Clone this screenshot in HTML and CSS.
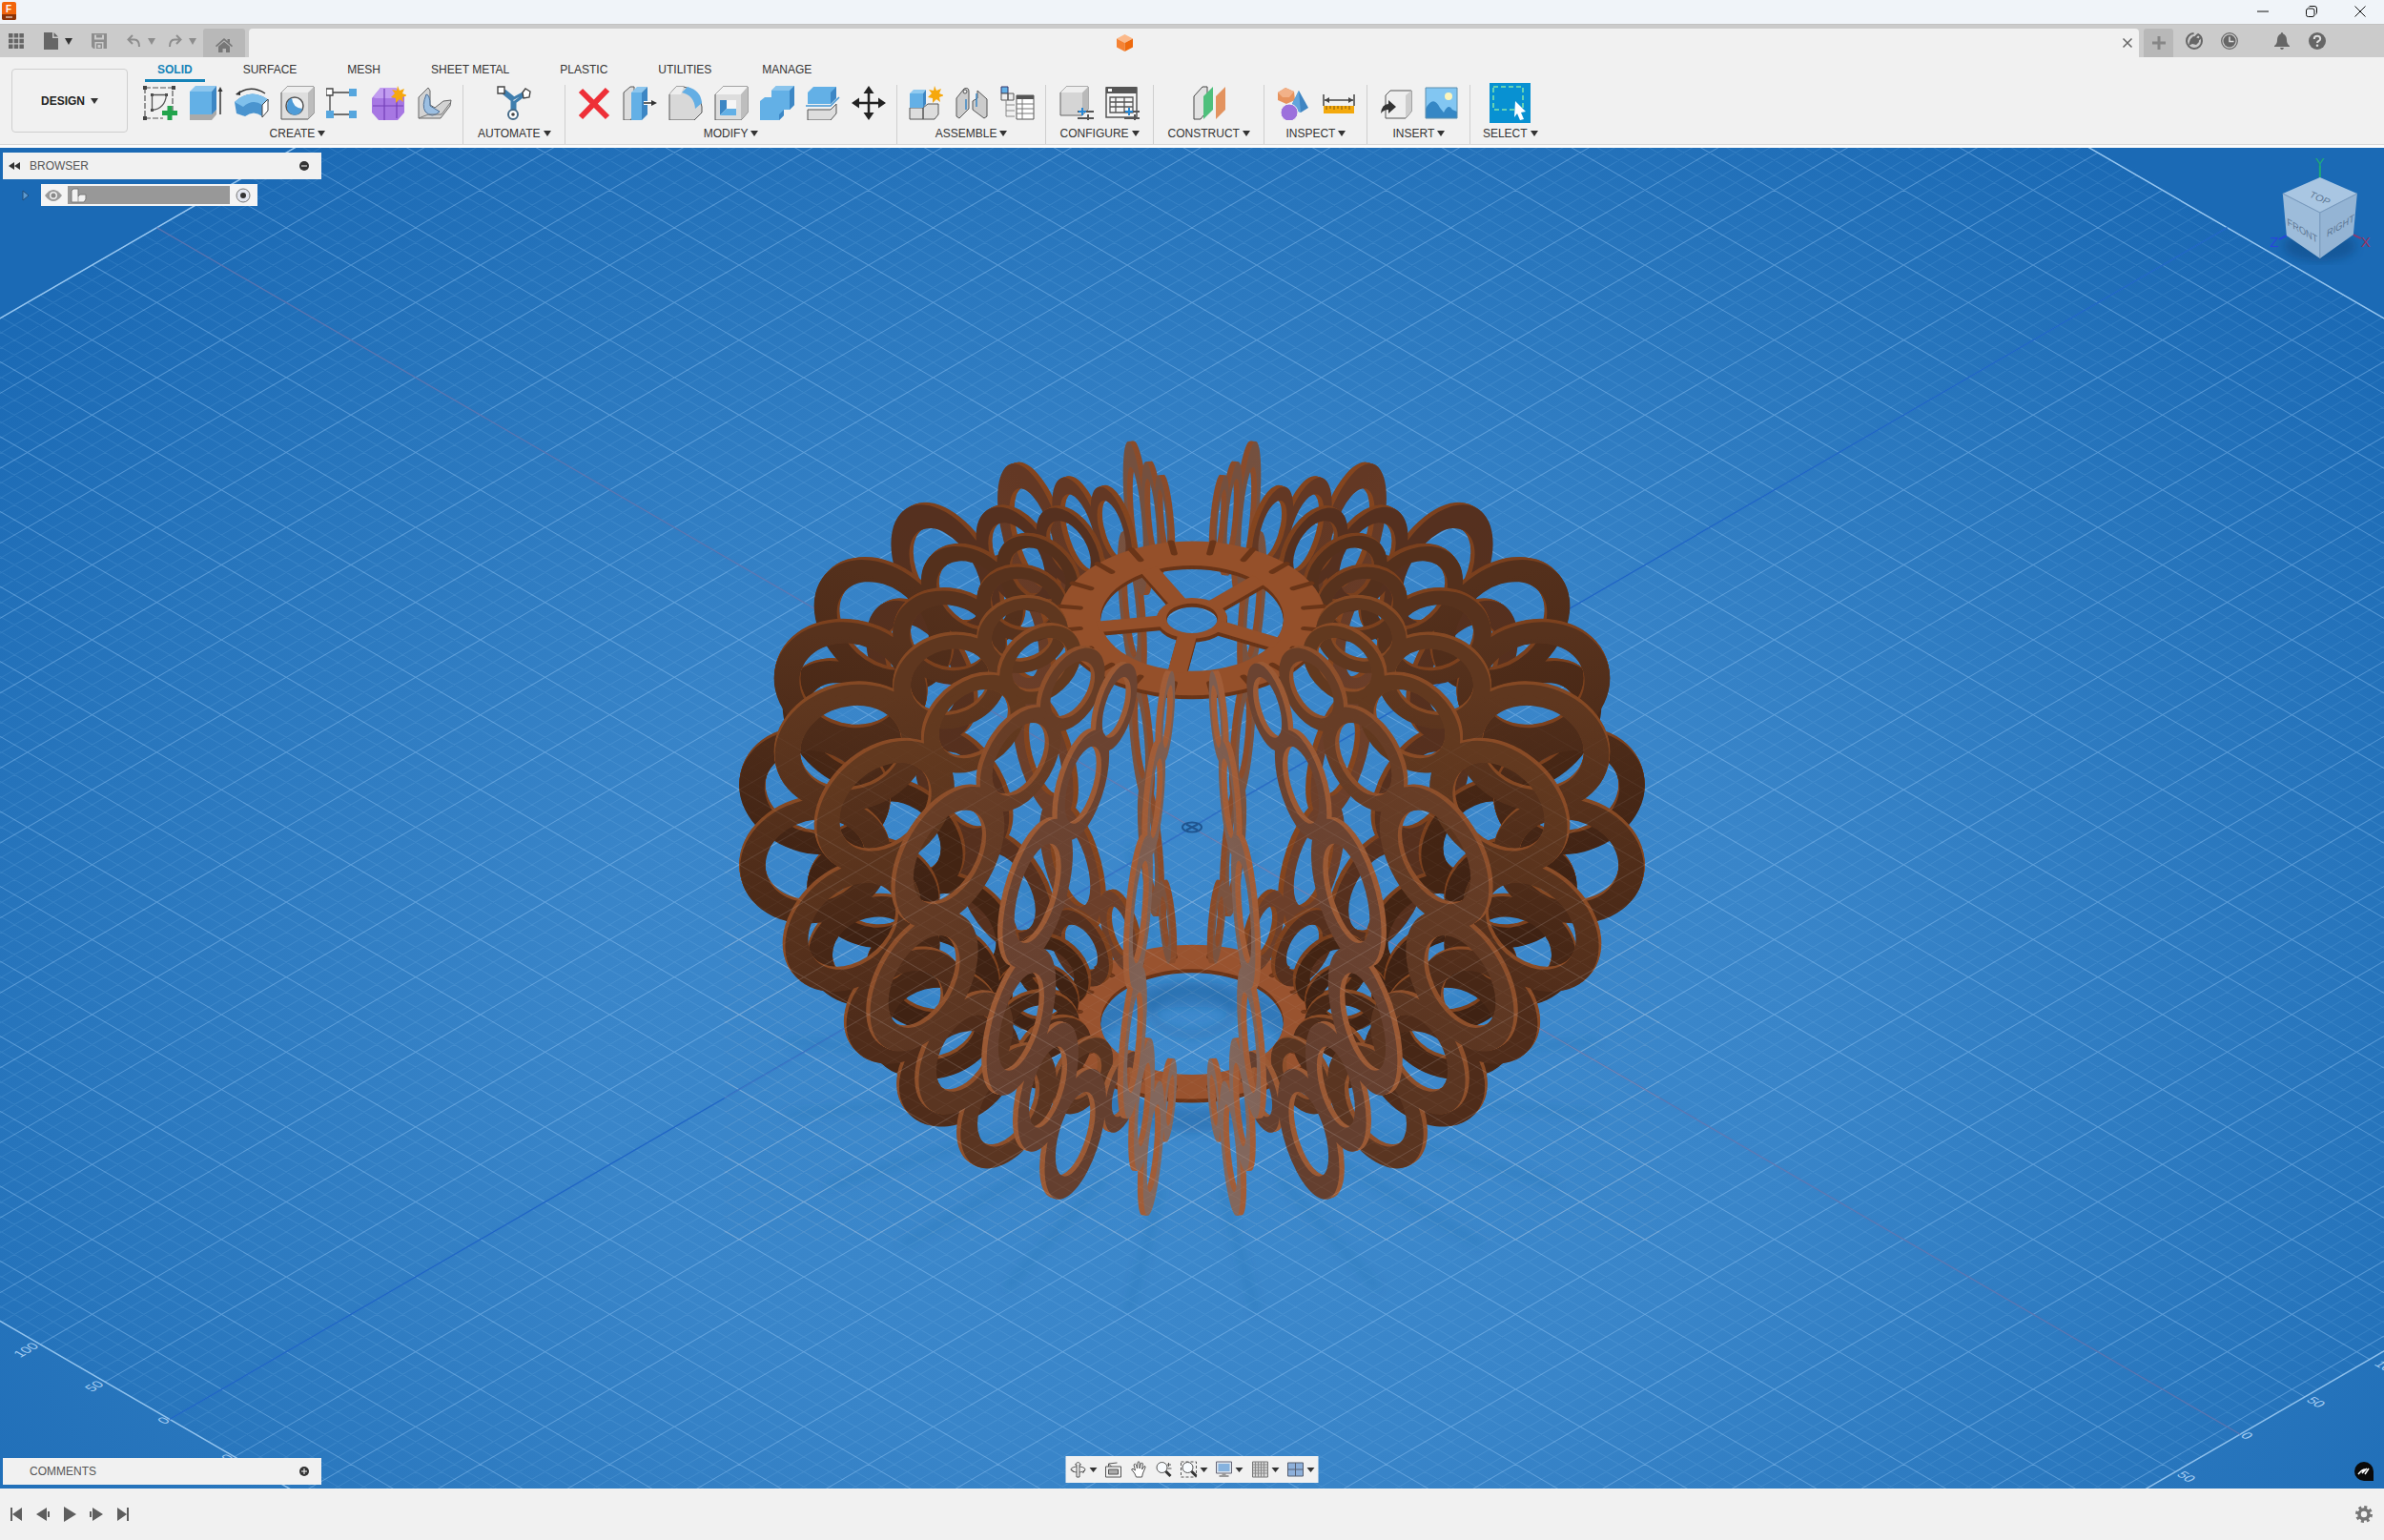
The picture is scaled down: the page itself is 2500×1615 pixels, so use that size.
FILE: index.html
```html
<!DOCTYPE html>
<html lang="en">
<head>
    <meta charset="UTF-8">
    <meta name="viewport" content="width=device-width, initial-scale=1.0">
    <title>Fusion</title>
    <link rel="stylesheet" href="styles.css">
</head>
<body>
    <!-- window title bar -->
    <header class="titlebar">
        <svg class="app-logo" width="15" height="19" viewBox="0 0 15 19"><rect width="15" height="19" rx="2" fill="#f2650c"/><path d="M0 13h15v4a2 2 0 0 1-2 2H2a2 2 0 0 1-2-2z" fill="#8b3206"/><text x="7" y="11" text-anchor="middle" font-size="10" font-weight="bold" fill="#fff">F</text><path d="M4 16h7" stroke="#fff"/></svg>
        <div class="window-buttons">
            <button aria-label="Minimize"><svg width="14" height="14"><path d="M1 7h12" stroke="#111"/></svg></button>
            <button aria-label="Restore"><svg width="14" height="14" fill="none" stroke="#111"><rect x="1.500" y="4" width="8.500" height="8.500" rx="2"/><path d="M4 2.500Q4.500 1.500 6 1.500h4Q12.500 1.500 12.500 4v4.500q0 1-1 1.500"/></svg></button>
            <button aria-label="Close"><svg width="14" height="14"><path d="M1.500 1.500l11 11M12.500 1.500l-11 11" stroke="#111"/></svg></button>
        </div>
    </header>

    <!-- quick access + document tabs -->
    <div class="tabbar">
        <div class="quick">
            <button aria-label="Data panel"><svg width="16" height="16" fill="#666"><path d="M0 0h4.500v4.500H0zM5.700 0h4.500v4.500H5.700zM11.400 0h4.500v4.500h-4.500zM0 5.700h4.500v4.500H0zM5.700 5.700h4.500v4.500H5.700zM11.400 5.700h4.500v4.500h-4.500zM0 11.400h4.500v4.500H0zM5.700 11.400h4.500v4.500H5.700zM11.400 11.400h4.500v4.500h-4.500z"/></svg></button>
            <button class="file" aria-label="File"><svg width="15" height="18" fill="#666"><path d="M0 0h9v6h6v12H0zM10.500 0L15 4.500h-4.500z"/></svg><i class="caret"></i></button>
            <button class="save" aria-label="Save"><svg width="16" height="16"><path fill="#8d8d8d" fill-rule="evenodd" d="M0 0h16v16H2l-2-2zM3 1.500v5h10v-5zM3.500 9v7h9V9z"/><path d="M5 1.500h6v3H5zM5 10.500h6V16H5z" fill="#8d8d8d"/><path d="M6.500 12h3v3h-3z" fill="#cbcbcb"/></svg></button>
            <button class="undo" aria-label="Undo"><svg width="15" height="14" fill="none" stroke="#8d8d8d" stroke-width="2"><path d="M6 1L1.500 5.500 6 10M2 5.500h6q5 0 5 7.500"/></svg><i class="caret dim"></i></button>
            <button class="redo" aria-label="Redo"><svg width="15" height="14" fill="none" stroke="#8d8d8d" stroke-width="2"><path d="M9 1l4.500 4.500L9 10M13 5.500H7q-5 0-5 7.500"/></svg><i class="caret dim"></i></button>
        </div>
        <button class="home-tab" aria-label="Home"><svg width="18" height="15" fill="#777"><path d="M9 0l9 8-1 1.200L9 2.300 1 9.200 0 8zM12.500 1H15v4l-2.500-2zM3 8.800L9 3.700l6 5.100V15h-4v-4H7.500v4H3z"/></svg></button>
        <div class="doc-tab">
            <svg class="doc-icon" width="17" height="18"><path d="M8.500 0L17 4.500 8.500 9 0 4.500z" fill="#fbb98a"/><path d="M0 4.500L8.500 9v9L0 13.500z" fill="#f58233"/><path d="M17 4.500L8.500 9v9l8.500-4.500z" fill="#ee6a0e"/></svg>
            <button class="doc-close" aria-label="Close tab"><svg width="12" height="12"><path d="M1.500 1.500l9 9M10.500 1.500l-9 9" stroke="#666" stroke-width="1.500"/></svg></button>
        </div>
        <button class="new-tab" aria-label="New design"><svg width="16" height="16"><path d="M8 1v14M1 8h14" stroke="#868686" stroke-width="3"/></svg></button>
        <div class="status">
            <button aria-label="Extensions"><svg width="18" height="18"><circle cx="9" cy="9" r="8" fill="none" stroke="#666" stroke-width="2" stroke-dasharray="37 4"/><path d="M3 14l4-2 4 1 3-3-1-4-5-2-3 3-1 3z" fill="#666"/><path d="M9 6l4-4M12 9l4-4" stroke="#666" stroke-width="2"/></svg></button>
            <button aria-label="Job status"><svg width="18" height="18"><circle cx="9" cy="9" r="8.300" fill="none" stroke="#666" stroke-width="1.200"/><circle cx="9" cy="9" r="6.500" fill="#666"/><path d="M9 4.500V9.500h4.500" fill="none" stroke="#ddd" stroke-width="1.500"/></svg></button>
            <button class="bell" aria-label="Notifications"><svg width="18" height="18" fill="#666"><path d="M9 0q1.200 0 1.200 1.500Q14 3 14 8q0 4 3 6v1H1v-1q3-2 3-6 0-5 3.800-6.500Q7.800 0 9 0zM7 16h4q-.5 2-2 2t-2-2z"/></svg></button>
            <button aria-label="Help"><svg width="18" height="18"><circle cx="9" cy="9" r="9" fill="#666"/><path d="M5.800 7q0-3.200 3.200-3.200T12.200 6.700Q12.200 8.200 10.500 9 9 9.800 9 11" fill="none" stroke="#ddd" stroke-width="2"/><circle cx="9" cy="13.800" r="1.300" fill="#ddd"/></svg></button>
        </div>
    </div>

    <!-- ribbon -->
    <div class="ribbon">
        <button class="workspace">DESIGN <i class="caret"></i></button>
        <div class="ribbon-main">
            <nav class="ribbon-tabs">
                <a href="#" class="active">SOLID</a><a href="#">SURFACE</a><a href="#">MESH</a><a href="#">SHEET METAL</a><a href="#">PLASTIC</a><a href="#">UTILITIES</a><a href="#">MANAGE</a>
            </nav>
            <div class="groups">
                <section class="group">
                    <div class="tools">
                        <button aria-label="Create sketch"><svg viewBox="0 0 36 36"><path d="M2 2h29v29M2 2v32h19" fill="none" stroke="#555" stroke-width="1.200" stroke-dasharray="6 2"/><g fill="#444"><path d="M0 0h4v4H0zM30 0h4v4h-4zM0 32h4v4H0zM8 8h3v3H8zM23 8h3v3h-3zM8 24h3v3H8z"/></g><path d="M9.500 9.500h15M9.500 9.500v16Q23 24 24.500 9.500" fill="none" stroke="#555" stroke-width="1.300"/><path d="M28 21v15M20 28.500h16" stroke="#22a44c" stroke-width="5"/></svg></button>
                        <button aria-label="Extrude"><svg viewBox="0 0 36 36"><path d="M1 30h22l6-5v5l-5 6H1z" fill="#aaa"/><path d="M1 6l6-6h22l-5 6z" fill="#8cc6ee"/><path d="M1 6h23v24H1z" fill="#63b0e6"/><path d="M24 6l5-6v25l-5 5z" fill="#3c86c4"/><path d="M33 30V4" stroke="#333" stroke-width="1.500"/><path d="M33 1l2.500 5h-5z" fill="#333"/></svg></button>
                        <button aria-label="Revolve"><svg viewBox="0 0 36 36"><path d="M0 17q17-16 36-2l-7 17q-9-7-18 0l-9-3z" fill="#4a94cf"/><path d="M0 17q17-16 36-2l-7 5q-10-7-20 2z" fill="#7fc0ec"/><path d="M29 20l6-6v12l-6 7z" fill="#fff" stroke="#444"/><path d="M2 9q15-11 30-1" fill="none" stroke="#333" stroke-width="1.500"/><path d="M1 9l5-4v5z" fill="#333"/></svg></button>
                        <button aria-label="Hole"><svg viewBox="0 0 36 36"><path d="M1 7l6-6h28v28l-6 6H1z" fill="#dedede" stroke="#555"/><path d="M29 7l6-6v28l-6 6z" fill="#bcbcbc"/><path d="M29 7l6-6H7L1 7z" fill="#eee"/><circle cx="15" cy="21" r="9" fill="#f5f9fc" stroke="#555" stroke-width="1.500"/><path d="M12 13q1 10 11 11a8 8 0 0 1-16-3q0-6 5-8z" fill="#4f9cd8"/></svg></button>
                        <button aria-label="Pattern"><svg viewBox="0 0 36 36"><path d="M4 7h24M4 7v23h24" fill="none" stroke="#444" stroke-width="1.300"/><path d="M0 3h7v7H0z" fill="#fff" stroke="#444" stroke-width="1.300"/><path d="M24 3h8v8h-8zM0 26h8v8H0zM24 26h8v8h-8z" fill="#56a6de"/></svg></button>
                        <button aria-label="Create form"><svg viewBox="0 0 36 36"><path d="M9 2h16l9 9v17l-7 8H7l-7-8V13z" fill="#a777e3"/><path d="M9 2h16l3 7-8 4H4L1 12z" fill="#c19cf0"/><path d="M13 3v33M1 21h32M26 12v22" fill="none" stroke="#7440b8" stroke-width="1.200"/><path d="M27 0l2 5 5-2-2 5 5 2-5 2 1 5-4-3-4 4v-5l-5-1 4-4-3-4 5 1z" fill="#f6a80d"/></svg></button>
                        <button aria-label="Flange"><svg viewBox="0 0 36 36"><path d="M1 12L11 2l2 3v15l5 3 9-7 8-1-1 6-10 13H1z" fill="#d3d3d3" stroke="#666"/><path d="M9 9q4 0 4 12l10 6q-8 8-15 0-4-6 1-18z" fill="#9cbfe2" stroke="#4c6f97"/><path d="M1 34l10-4h14l9-12" fill="none" stroke="#777"/></svg></button>
                    </div>
                    <button class="group-label">CREATE <i class="caret"></i></button>
                </section>
                <section class="group">
                    <div class="tools">
                        <button aria-label="Automate"><svg viewBox="0 0 36 36"><path d="M5 6l11 9v13M31 8l-12 9v11M8 5l10 8L29 7" fill="none" stroke="#3f7eae" stroke-width="3"/><path d="M1 1h7v7H1zM27 7l3-4 5 3-1 6-6 1z" fill="#fff" stroke="#444" stroke-width="1.400"/><circle cx="17" cy="30" r="5" fill="#fff" stroke="#466b88" stroke-width="2"/><circle cx="17" cy="30" r="1.800" fill="#444"/></svg></button>
                    </div>
                    <button class="group-label">AUTOMATE <i class="caret"></i></button>
                </section>
                <section class="group">
                    <div class="tools">
                        <button aria-label="Delete"><svg viewBox="0 0 36 36"><path d="M4 5l28 28M32 4L4 33" stroke="#ee2f37" stroke-width="6"/></svg></button>
                        <button aria-label="Press pull"><svg viewBox="0 0 36 36"><path d="M1 7l7-6h4v30l-4 5H1z" fill="#ddd" stroke="#555"/><path d="M9 7l6-6h11l-6 6z" fill="#8cc6ee"/><path d="M9 7h11v29H9z" fill="#63b0e6"/><path d="M20 7l6-6v29l-6 6z" fill="#3c86c4"/><path d="M22 18h9" stroke="#fff" stroke-width="4"/><path d="M22 18h9" stroke="#333" stroke-width="1.500"/><path d="M30 15l6 3-6 3z" fill="#333"/></svg></button>
                        <button aria-label="Fillet"><svg viewBox="0 0 36 36"><path d="M1 9l7-8h8q17 3 19 21v6l-8 8H1z" fill="#d8d8d8" stroke="#555"/><path d="M1 9l7-8h8l-3 8z" fill="#eee"/><path d="M20 1q14 4 15 17l-7 6Q27 10 14 7z" fill="#63aee4"/></svg></button>
                        <button aria-label="Shell"><svg viewBox="0 0 36 36"><path d="M1 9l8-8h26v27l-7 8H1z" fill="#ddd" stroke="#555"/><path d="M1 9l8-8h26l-7 8z" fill="#f3f3f3"/><path d="M28 9l7-8v27l-7 8z" fill="#bebebe"/><path d="M6 15h17v16H6z" fill="#f6f6f6"/><path d="M6 15h7v9l-7 7z" fill="#3c86c4"/><path d="M13 24h10v7H6z" fill="#63b0e6"/></svg></button>
                        <button aria-label="Combine"><svg viewBox="0 0 36 36"><path d="M0 16l5-4h7V5l5-5h19v20l-5 5h-6v6l-5 5H0z" fill="#63b0e6"/><path d="M12 5l5-5h19l-5 5z" fill="#8ac4ec"/><path d="M31 5l5-5v20l-5 5zM20 30l5-5v6l-5 5z" fill="#3d87c5"/></svg></button>
                        <button aria-label="Split body"><svg viewBox="0 0 36 36"><path d="M2 7l6-6h24v12l-6 6H2z" fill="#63b0e6"/><path d="M26 7l6-6v12l-6 6z" fill="#3d87c5"/><path d="M2 25h24l6-6v10l-6 7H2z" fill="#ddd" stroke="#555"/><path d="M0 21h26l9-9" fill="none" stroke="#4596d3" stroke-width="1.500"/></svg></button>
                        <button aria-label="Move"><svg viewBox="0 0 36 36"><path d="M18 5v26M5 18h26" stroke="#222" stroke-width="2.500"/><path d="M18 0l5.500 8h-11zM18 36l5.500-8h-11zM0 18l8-5.500v11zM36 18l-8-5.500v11z" fill="#222"/></svg></button>
                    </div>
                    <button class="group-label">MODIFY <i class="caret"></i></button>
                </section>
                <section class="group">
                    <div class="tools">
                        <button aria-label="New component"><svg viewBox="0 0 36 36"><path d="M1 23h14v12H1zM15 23l5-4h11v11l-4 5H15z" fill="#ddd" stroke="#555"/><path d="M1 8l4-4h13l-3 4z" fill="#90caf0"/><path d="M1 8h14v15H1z" fill="#63b0e6"/><path d="M15 8l3-4v15l-3 4z" fill="#3c86c4"/><path d="M27 0l2 5 5-2-2 5 5 2-5 2 1 5-4-3-4 4v-5l-5-1 4-4-3-4 5 1z" fill="#f6a80d"/></svg></button>
                        <button aria-label="Joint"><svg viewBox="0 0 36 36"><path d="M2 13L10 3q5-2 5 3v18L5 34l-3-2z" fill="#ccc" stroke="#555"/><path d="M34 14L24 5v8l-5 3v9l12 9 3-2z" fill="#ccc" stroke="#555"/><path d="M12 14v11M23 8v14" stroke="#3c86c4" stroke-width="1.500"/><circle cx="11" cy="6" r="2" fill="#eee" stroke="#555"/></svg></button>
                        <button aria-label="Bill of materials"><svg viewBox="0 0 36 36"><path d="M1 1h7v7H1z" fill="#63b0e6" stroke="#336"/><path d="M1 8h7v7H1zM8 8h6v7H8z" fill="#eee" stroke="#555"/><path d="M6 20h9M6 26h9M6 32h9M6 15v17" stroke="#888"/><path d="M17 10h18v25H17z" fill="#fff" stroke="#555"/><path d="M17 10h18v4H17z" fill="#555"/><path d="M17 19h18M17 24h18M17 29h18M23 14v21" stroke="#777"/></svg></button>
                    </div>
                    <button class="group-label">ASSEMBLE <i class="caret"></i></button>
                </section>
                <section class="group">
                    <div class="tools">
                        <button aria-label="Configure"><svg viewBox="0 0 36 36"><path d="M1 7l6-6h23v24l-6 6H1z" fill="#d5d5d5" stroke="#666"/><path d="M24 7l6-6v24l-6 6z" fill="#b9b9b9"/><path d="M1 7l6-6h23l-6 6z" fill="#eee"/><path d="M19 27h17M19 34h17" stroke="#555" stroke-width="2"/><path d="M24 23v8M20 27h8" stroke="#2787d4" stroke-width="2"/><path d="M30 30v7" stroke="#555" stroke-width="2"/></svg></button>
                        <button aria-label="Configuration table"><svg viewBox="0 0 36 36"><path d="M1 2h32v31H1z" fill="#f6f6f6" stroke="#555" stroke-width="1.500"/><path d="M1 1h32v7H1z" fill="#555"/><path d="M3 3h4v3H3z" fill="#fff"/><path d="M5 12h24v16H5zM5 17h24M5 22h24M11 12v16M20 12v16" fill="none" stroke="#555" stroke-width="1.300"/><path d="M20 27h16M20 34h16" stroke="#555" stroke-width="2"/><path d="M25 23v8M21 27h8" stroke="#2787d4" stroke-width="2"/><path d="M31 30v7" stroke="#555" stroke-width="2"/></svg></button>
                    </div>
                    <button class="group-label">CONFIGURE <i class="caret"></i></button>
                </section>
                <section class="group">
                    <div class="tools">
                        <button aria-label="Offset plane"><svg viewBox="0 0 36 36"><path d="M2 11l9-10h5v25l-7 9H2z" fill="#e2e2e2" stroke="#444"/><path d="M12 11l10-10v24L12 35z" fill="#4fc07c"/><path d="M25 11L35 1v24L25 35z" fill="#e3935f"/></svg></button>
                    </div>
                    <button class="group-label">CONSTRUCT <i class="caret"></i></button>
                </section>
                <section class="group">
                    <div class="tools">
                        <button aria-label="Inspect"><svg viewBox="0 0 36 36"><path d="M10 2l9 4 1 9-9 4-9-4V7z" fill="#e7935e"/><path d="M10 2l9 4-5 6H7L2 7z" fill="#f2b188"/><path d="M24 5l10 18-8 5-11-5z" fill="#3f85c2"/><path d="M24 5l2 23-11-5z" fill="#62a5dc"/><circle cx="14" cy="28" r="9" fill="#9c70dc" stroke="#f1f1f1"/></svg></button>
                        <button aria-label="Measure"><svg viewBox="0 0 36 36"><path d="M2 9v12M34 9v12M3 15h30" stroke="#444" stroke-width="1.500"/><path d="M3 15l5-3v6zM33 15l-5-3v6z" fill="#444"/><path d="M2 21h32v8H2z" fill="#f3a90d"/><path d="M5 21v4M9 21v3M13 21v4M17 21v3M21 21v4M25 21v3M29 21v4" stroke="#84590a"/></svg></button>
                    </div>
                    <button class="group-label">INSPECT <i class="caret"></i></button>
                </section>
                <section class="group">
                    <div class="tools">
                        <button aria-label="Insert derive"><svg viewBox="0 0 36 36"><path d="M7 10l5-5h22v22l-6 7H7z" fill="#eee" stroke="#555"/><path d="M28 10l6-5v22l-6 7z" fill="#cdcdcd"/><path d="M2 29q1-10 8-10v-4l8 7-8 7v-4q-5 0-8 4z" fill="#333"/></svg></button>
                        <button aria-label="Insert image"><svg viewBox="0 0 36 36"><path d="M1 2h33v32H1z" fill="#82c6f2"/><path d="M1 24q8-15 15-1l4 5q5-10 9-3l5 2v7H1z" fill="#3587c5"/><circle cx="25" cy="11" r="4" fill="#fbf5bd"/><path d="M1 2h33v32H1z" fill="none" stroke="#5b8eae"/></svg></button>
                    </div>
                    <button class="group-label">INSERT <i class="caret"></i></button>
                </section>
                <section class="group last">
                    <div class="tools">
                        <button class="select-tool" aria-label="Select"><svg viewBox="0 0 43 42"><rect width="43" height="42" fill="#0891d2"/><path d="M4 4h31v24H4z" fill="none" stroke="#82e6ac" stroke-width="1.500" stroke-dasharray="5 3"/><path d="M27 19l11 11-5 1 3 7-4 1-3-7-3 4z" fill="#fff"/></svg></button>
                    </div>
                    <button class="group-label">SELECT <i class="caret"></i></button>
                </section>
            </div>
        </div>
    </div>

    <!-- 3D canvas -->
    <main class="viewport">
        <svg class="scene" viewBox="0 155 2500 1405" preserveAspectRatio="xMidYMid slice">
            <defs>
                <radialGradient id="sky" gradientUnits="userSpaceOnUse" cx="0" cy="0" r="1" gradientTransform="translate(1250 1080) scale(1600 1150)">
                    <stop offset="0" stop-color="#3e8acd"/>
                    <stop offset=".4" stop-color="#3985c9"/>
                    <stop offset=".75" stop-color="#2876bd"/>
                    <stop offset="1" stop-color="#1b6ab5"/>
                </radialGradient>
                <linearGradient id="fade" gradientUnits="userSpaceOnUse" x1="0" y1="720" x2="0" y2="980">
                    <stop offset="0" stop-color="#000"/>
                    <stop offset="1" stop-color="#fff"/>
                </linearGradient>
                <mask id="low"><rect x="760" y="700" width="980" height="600" fill="url(#fade)"/></mask>
                <filter id="soft"><feGaussianBlur stdDeviation="5"/></filter>
            </defs>
            <rect y="155" width="2500" height="1405" fill="url(#sky)"/>
            <g id="grid" fill="none"></g>
            <g class="floor-text">
                <text transform="matrix(.87 -.5 .87 .5 22 1423)">100</text>
                <text transform="matrix(.87 -.5 .87 .5 97 1459)">50</text>
                <text transform="matrix(.87 -.5 .87 .5 173 1493)">0</text>
                <text transform="matrix(.87 -.5 .87 .5 240 1532)">0</text>
                <text transform="matrix(.87 .5 -.87 .5 2488 1430)">100</text>
                <text transform="matrix(.87 .5 -.87 .5 2417 1468)">50</text>
                <text transform="matrix(.87 .5 -.87 .5 2348 1505)">0</text>
                <text transform="matrix(.87 .5 -.87 .5 2281 1546)">50</text>
            </g>
            <g id="shadow" filter="url(#soft)" fill="none" stroke="#1d5a96"></g>
            <g id="model"></g>
            <g id="grid-over" mask="url(#low)" fill="none"></g>
            <g fill="none" stroke="#1f5590" stroke-width="2"><ellipse cx="1250" cy="867" rx="10" ry="5"/><path d="M1244 864l12 6M1244 870l12-6"/></g>
            <!-- view cube -->
            <g>
                <ellipse cx="2432" cy="258" rx="38" ry="16" fill="#0c4278" opacity=".45" filter="url(#soft)"/>
                <path d="M2432 186V174" stroke="#1eaa78" stroke-width="2"/>
                <path d="M2397 247l-8 4" stroke="#2746dc" stroke-width="2"/>
                <path d="M2467 246l8 4" stroke="#8a3a72" stroke-width="2"/>
                <path d="M2432 186l39 17-39 20-39-20z" fill="#a9c6e2"/>
                <path d="M2393 203l39 20v48l-35-24z" fill="#9dbcda"/>
                <path d="M2471 203l-39 20v48l35-25z" fill="#94b4d4"/>
                <path d="M2393 203l39 20 39-20M2432 223v48" fill="none" stroke="#7b9bbd"/>
                <g class="cube-text" fill="#5d7794">
                    <text transform="matrix(.9 .42 -.5 .75 2420 206)">TOP</text>
                    <text transform="matrix(.84 .5 .08 1 2398 236)">FRONT</text>
                    <text transform="matrix(.84 -.5 -.08 1 2439 249)">RIGHT</text>
                </g>
                <g class="axis-text">
                    <text x="2432" y="176" fill="#1eaa78">Y</text>
                    <text x="2384" y="259" fill="#2746dc">Z</text>
                    <text x="2480" y="259" fill="#9c3360">X</text>
                </g>
            </g>
        </svg>

        <div class="browser">
            <div class="panel">
                <svg class="collapse" width="12" height="8"><path d="M6 0v8L0 4zM12 0v8L6 4z" fill="#333"/></svg>
                <span>BROWSER</span>
                <button aria-label="Collapse browser"><svg width="10" height="10"><circle cx="5" cy="5" r="5" fill="#333"/><path d="M2 5h6" stroke="#fff"/></svg></button>
            </div>
            <div class="tree">
                <svg class="expand" width="8" height="12"><path d="M1 1l6 5-6 5z" fill="#5d9ad0" stroke="#234c77"/></svg>
                <div class="tree-row">
                    <svg width="18" height="12"><path d="M0 6q9-12 18 0-9 12-18 0z" fill="#9a9a9a"/><circle cx="9" cy="6" r="4" fill="#eee"/><circle cx="9" cy="6" r="2.500" fill="#888"/></svg>
                    <div class="tree-name"><svg width="17" height="16"><path d="M1 3l2-2h5v8l2-2h6v5l-2 3H1z" fill="#f2f2f2" stroke="#777"/><path d="M8 9v6" stroke="#999"/></svg></div>
                    <svg width="16" height="16"><circle cx="8" cy="8" r="7" fill="#e3e6ef" stroke="#777"/><circle cx="8" cy="8" r="3" fill="#333"/></svg>
                </div>
            </div>
        </div>

        <div class="panel comments">
            <span>COMMENTS</span>
            <button aria-label="Expand comments"><svg width="10" height="10"><circle cx="5" cy="5" r="5" fill="#333"/><path d="M2 5h6M5 2v6" stroke="#fff"/></svg></button>
        </div>

        <div class="navbar">
            <button aria-label="Orbit"><svg width="18" height="18" fill="none" stroke="#555"><ellipse cx="9" cy="9" rx="7.500" ry="3"/><path d="M7.500 17V4H6l3-3 3 3h-1.500v13z" fill="#eee"/><path d="M2 9l3 3M16 10l-2 3"/></svg><i class="caret"></i></button>
            <button aria-label="Look at"><svg width="18" height="18" fill="none" stroke="#555"><path d="M1 6h16v11H1zM4 6V3l9-1M4 3l3 3"/><path d="M4 9h10v5H4z" fill="#aaa"/></svg></button>
            <button aria-label="Pan"><svg width="18" height="18"><path d="M6 17Q5 13 1 9q1-2 4 1L3.500 4q1.500-1.500 2.500 0l1 4 .5-6.500q1-1.500 2 0V8l1.500-5.500q1.500-1 2 .5L12 9l2.500-3.500q1.500 0 1 1.500L13 13l-1 4z" fill="#fff" stroke="#555"/></svg></button>
            <button aria-label="Zoom"><svg width="18" height="18" fill="none" stroke="#555"><circle cx="7" cy="7" r="5.500" fill="#f8fbfe"/><path d="M11 11l5 5" stroke="#333" stroke-width="3"/><path d="M14 2v4M12.500 4h4M13 8h4"/></svg></button>
            <button aria-label="Zoom window"><svg width="18" height="18" fill="none" stroke="#555"><path d="M1 1h16v16H1z" stroke-dasharray="3 2"/><circle cx="8" cy="7" r="5.500" fill="#f8fbfe"/><path d="M12 11l5 5" stroke="#333" stroke-width="3"/></svg><i class="caret"></i></button>
            <button aria-label="Display settings"><svg width="18" height="18"><path d="M1 1h16v12H1z" fill="#dde5ee" stroke="#667"/><path d="M3 3h12v8H3z" fill="#86b2de"/><path d="M7 13h4v2h3v2H4v-2h3z" fill="#999"/></svg><i class="caret"></i></button>
            <button aria-label="Grid and snaps"><svg width="18" height="18"><path d="M1 1h16v16H1z" fill="#d6d6d6" stroke="#777"/><path d="M4 1v16M7 1v16M10 1v16M13 1v16M1 4h16M1 7h16M1 10h16M1 13h16" stroke="#8a8a8a"/></svg><i class="caret"></i></button>
            <button aria-label="Viewports"><svg width="18" height="18"><path d="M1 2h16v14H1z" fill="#8eb0da" stroke="#555e70"/><path d="M9 2v14M1 9h16" stroke="#555e70"/></svg><i class="caret"></i></button>
        </div>

        <button class="assistant" aria-label="Assistant"><svg width="20" height="20"><path d="M10 0a10 10 0 0 1 10 10v10H10a10 10 0 0 1 0-20z" fill="#0a0a0a"/><path d="M4 13q4-5 7-5l-3 4 5-5M11 13l4-6" stroke="#fff" stroke-width="1.500" fill="none"/></svg></button>
    </main>

    <!-- timeline -->
    <footer class="timeline">
        <div class="playback">
            <button aria-label="Go to start"><svg width="14" height="16" fill="#5e5e5e"><path d="M1 1h2v14H1zM13 1v14L3 8z"/></svg></button>
            <button aria-label="Step back"><svg width="14" height="16" fill="#5e5e5e"><path d="M11 1v14L0 8zM12 5h2v6h-2z"/></svg></button>
            <button aria-label="Play"><svg width="14" height="16" fill="#5e5e5e"><path d="M1 0l13 8-13 8z"/></svg></button>
            <button aria-label="Step forward"><svg width="14" height="16" fill="#5e5e5e"><path d="M3 1v14l11-7zM0 5h2v6H0z"/></svg></button>
            <button aria-label="Go to end"><svg width="14" height="16" fill="#5e5e5e"><path d="M1 1v14l10-7zM11 1h2v14h-2z"/></svg></button>
        </div>
        <button aria-label="Timeline settings"><svg width="18" height="18"><circle cx="9" cy="9" r="5" fill="none" stroke="#777" stroke-width="3.500"/><circle cx="9" cy="9" r="7.500" fill="none" stroke="#777" stroke-width="3" stroke-dasharray="3 2.890"/></svg></button>
    </footer>

    <script src="scene.js"></script>
</body>
</html>
```

FILE: styles.css
```css
* {
    box-sizing: border-box;
}

body {
    margin: 0;
    height: 100vh;
    display: flex;
    flex-direction: column;
    overflow: hidden;
    background: #f1f1f1;
    color: #333;
    font-family: "Liberation Sans", Arial, sans-serif;
    font-size: 12px;
    line-height: 16px;
}

button {
    padding: 0;
    border: none;
    background: none;
    color: inherit;
    font: inherit;
    display: flex;
    align-items: center;
    justify-content: center;
}

svg {
    display: block;
    flex: none;
}

.caret {
    border: 4px solid transparent;
    border-top: 6px solid #333;
    border-bottom: none;
}

.caret.dim {
    border-top-color: #8d8d8d;
}

/* title bar */
.titlebar {
    height: 25px;
    display: flex;
    align-items: center;
    justify-content: space-between;
    padding: 0 18px 2px 2px;
    background: #f0f4f9;
}

.window-buttons {
    display: flex;
    gap: 37px;
}

/* document tabs */
.tabbar {
    height: 35px;
    display: flex;
    padding-top: 4px;
    background: #cbcbcb;
    border-top: 1px solid #c2c2c2;
}

.quick {
    width: 213px;
    display: flex;
    align-items: center;
    padding: 0 0 4px 9px;
}

.quick .caret {
    margin-left: 7px;
    border-top-width: 7px;
}

.file {
    margin-left: 21px;
}

.save {
    margin-left: 20px;
}

.undo {
    margin-left: 21px;
}

.redo {
    margin-left: 13px;
}

.home-tab {
    width: 44px;
    margin-right: 4px;
    padding-top: 5px;
    background: #b8b8b8;
    border-radius: 3px 3px 0 0;
}

.doc-tab {
    flex: 1;
    display: flex;
    align-items: center;
    background: #f1f1f1;
    border-radius: 4px 4px 0 0;
}

.doc-icon {
    margin: 0 auto;
    transform: translateX(-64px);
}

.doc-close {
    margin-right: 6px;
}

.new-tab {
    width: 31px;
    margin-left: 5px;
    background: #b8b8b8;
    border-radius: 3px 3px 0 0;
}

.status {
    width: 221px;
    display: flex;
    gap: 19px;
    padding: 0 0 4px 13px;
}

.bell {
    margin-left: 18px;
}

/* ribbon */
.ribbon {
    height: 95px;
    display: flex;
    padding-left: 12px;
    background: #f1f1f1;
    border-bottom: 3px solid #fcfcfc;
    box-shadow: inset 0 -1px #d6d6d6;
}

.workspace {
    width: 122px;
    height: 67px;
    margin: 12px 4px 0 0;
    gap: 6px;
    border: 1px solid #cfcfcf;
    border-radius: 4px;
    font-weight: bold;
    color: #222;
}

.ribbon-tabs {
    display: flex;
    height: 26px;
    padding-top: 5px;
}

.ribbon-tabs a {
    height: 21px;
    margin: 0 13px 0 14px;
    padding: 0 13px;
    color: #333;
    text-decoration: none;
}

.ribbon-tabs .active {
    color: #1583b8;
    font-weight: bold;
    border-bottom: 3px solid #1583b8;
}

.groups {
    display: flex;
    height: 62px;
    margin-top: 3px;
}

.group {
    display: flex;
    flex-direction: column;
    align-items: center;
    padding: 0 11px 0 12px;
    border-right: 1px solid #cfcfcf;
}

.group.last {
    border-right: none;
    padding: 0 10px;
}

.tools {
    display: flex;
    gap: 12px;
    height: 38px;
    align-items: center;
}

.tools svg {
    width: 36px;
    height: 36px;
}

.tools .select-tool svg {
    width: 43px;
    height: 42px;
}

.group-label {
    gap: 3px;
    padding: 0 3px;
    margin-top: 5px;
    white-space: nowrap;
}

/* canvas */
.viewport {
    flex: 1;
    position: relative;
    overflow: hidden;
    background: #3380c5;
}

.scene {
    width: 100%;
    height: 100%;
}

.floor-text {
    fill: #a5cdf2;
    font-size: 14px;
}

.cube-text {
    font-size: 11px;
}

.axis-text {
    font-size: 15px;
    text-anchor: middle;
}

.browser {
    position: absolute;
    top: 5px;
    left: 3px;
}

.panel {
    width: 334px;
    height: 28px;
    display: flex;
    align-items: center;
    padding: 0 13px 0 6px;
    background: #f1f1f1;
    color: #555;
}

.collapse {
    margin-right: 10px;
}

.panel button {
    margin-left: auto;
}

.tree {
    display: flex;
    align-items: center;
    gap: 12px;
    margin-top: 5px;
    padding-left: 20px;
}

.tree-row {
    width: 227px;
    height: 23px;
    display: flex;
    align-items: center;
    gap: 6px;
    padding: 0 7px 0 4px;
    background: #f4f4f4;
}

.tree-name {
    flex: 1;
    height: 19px;
    padding: 2px 3px;
    background: #989898;
}

.comments {
    position: absolute;
    left: 3px;
    bottom: 4px;
    padding-left: 28px;
}

.navbar {
    position: absolute;
    left: 50%;
    bottom: 6px;
    transform: translateX(-50%);
    display: flex;
    align-items: center;
    justify-content: space-between;
    width: 265px;
    height: 28px;
    padding: 0 4px;
    background: #f1f1f1;
}

.navbar .caret {
    border-width: 5px 4px 0;
    margin-left: 3px;
}

.assistant {
    position: absolute;
    right: 11px;
    bottom: 8px;
}

/* timeline */
.timeline {
    height: 54px;
    display: flex;
    align-items: center;
    justify-content: space-between;
    padding: 0 12px 0 10px;
    background: #f1f1f1;
}

.playback {
    display: flex;
    gap: 14px;
}
```

FILE: scene.js
```js
const CX = 1250, CY = 862;
const SIN = 0.577, COS = 0.816; // isometric tilt

// floor grid
const GY = 867, STEP = 78.54, SLOPE = 0.5792;

// a: index of "/" lines, b: index of "\" lines, both in grid cells
function floor(a, b) {
    return [CX + (a - b) * STEP / 2 / SLOPE, GY + (a + b) * STEP / 2];
}

function segment(p, q) {
    return `M${p[0].toFixed(1)} ${p[1].toFixed(1)}L${q[0].toFixed(1)} ${q[1].toFixed(1)}`;
}

const A0 = -16, A1 = 16.2, B0 = -16, B1 = 15.8;

function gridLines(step, skip) {
    let d = '';
    for (let i = -16 / step; i <= 16 / step; i++) {
        if (skip && i % skip === 0) continue;
        const k = i * step;
        d += segment(floor(k, B0), floor(k, B1));
        if (k <= B1) d += segment(floor(A0, k), floor(A1, k));
    }
    return d;
}

const major = gridLines(1, 0);
const minor = gridLines(0.2, 5);
const border = [floor(A0, B0), floor(A1, B0), floor(A1, B1), floor(A0, B1)];

document.getElementById('grid').innerHTML = `
    <path d="${minor}" stroke="#8fc4f5" stroke-opacity=".16"/>
    <path d="${major}" stroke="#9fd0fa" stroke-opacity=".4"/>
    <path d="M${border.map(p => p.join(' ')).join('L')}Z" stroke="#a9d3f8" stroke-opacity=".8" stroke-width="1.5"/>
    <path d="${segment(floor(0, B0), floor(0, B1))}" stroke="#1f66c4" stroke-width="1.5"/>
    <path d="${segment(floor(A0, 0), floor(A1, 0))}" stroke="#5a629f" stroke-width="1.5" stroke-opacity=".6"/>`;
document.getElementById('grid-over').innerHTML = `
    <path d="${minor}" stroke="#cfb5a8" stroke-opacity=".07"/>
    <path d="${major}" stroke="#d8cac4" stroke-opacity=".2"/>`;

// rib profile: distance from axis, height, outer radius, hole radius
const rings = [
    [180, 262, 48, 33],
    [257, 211, 60, 42],
    [362, 138, 81, 54],
    [400, -3, 80, 53],
    [338, -126, 70, 44],
    [275, -226, 71, 46],
    [164, -242, 44, 27]
];

function circle(x, y, r, sweep) {
    return `M${x - r} ${y}a${r} ${r} 0 1 ${sweep} ${2 * r} 0a${r} ${r} 0 1 ${sweep} ${-2 * r} 0z`;
}

const profile = rings.map(([x, y, r, h]) => circle(x, y, r, 1) + circle(x, y, h, 0)).join('');

// face colours, back to front: top, bottom, edge
const shades = [
    ['#74503f', '#7a5340', '#8a4c2b'],
    ['#633824', '#6c3f2a', '#84451f'],
    ['#55301f', '#56301e', '#7d421f'],
    ['#54301c', '#432413', '#7b411f'],
    ['#57321d', '#3f2213', '#7d421f'],
    ['#5f371f', '#472716', '#864a25'],
    ['#62391f', '#4f2c1a', '#8a4c27'],
    ['#673d26', '#5a3521', '#8e502c'],
    ['#6b4331', '#643f2f', '#9b5a35'],
    ['#7d5d50', '#82675d', '#a15d38']
];

let defs = '';

function rib(i, side) {
    const t = (9 + 18 * i) * Math.PI / 180;
    const s = Math.sin(t), c = Math.cos(t);
    const [top, bottom, edge] = shades[i];
    let out = '';
    for (let k = -3; k <= 3; k++) {
        const x = CX - side * c * k;
        const y = CY + s * SIN * k;
        const fill = k === 3 ? `url(#rib${i})` : edge;
        out += `<path d="${profile}" fill="${fill}" transform="matrix(${-side * s} ${-c * SIN} 0 ${-COS} ${x} ${y})"/>`;
    }
    if (side === 1) {
        defs += `<linearGradient id="rib${i}" gradientUnits="userSpaceOnUse" x1="300" y1="200" x2="300" y2="-120">
            <stop offset="0" stop-color="${top}"/><stop offset="1" stop-color="${bottom}"/></linearGradient>`;
    }
    return out;
}

function disc(cy, spokes, top, edge) {
    let arms = '';
    if (spokes) {
        for (let a = 45; a < 405; a += 72) {
            const r = a * Math.PI / 180;
            arms += `M${30 * Math.cos(r)} ${-30 * Math.sin(r)}L${100 * Math.cos(r)} ${-100 * Math.sin(r)}`;
        }
    }
    const body = circle(0, 0, 140, 1) + circle(0, 0, 96, 0) + (spokes ? circle(0, 0, 37, 1) + circle(0, 0, 27, 0) : '');
    let out = '';
    for (let k = 4; k >= 0; k--) {
        const color = k ? edge : top;
        out += `<g transform="matrix(1 0 0 ${SIN} ${CX} ${cy + k})"><path d="${body}" fill="${color}"/><path d="${arms}" stroke="${color}" stroke-width="20"/></g>`;
    }
    // slots where the ribs plug in
    let slots = '';
    for (let a = 9; a < 360; a += 18) {
        const r = a * Math.PI / 180;
        slots += `M${119 * Math.sin(r)} ${-119 * Math.cos(r)}L${140 * Math.sin(r)} ${-140 * Math.cos(r)}`;
    }
    out += `<path d="${slots}" stroke="${edge}" stroke-width="7" stroke-linecap="round" transform="matrix(1 0 0 ${SIN} ${CX} ${cy})"/>`;
    return out;
}

let back = '', front = '';
for (let i = 0; i < 10; i++) {
    const pair = rib(i, 1) + rib(i, -1);
    if (i < 5) back += pair;
    else front += pair;
}

document.getElementById('model').innerHTML = `<defs>${defs}</defs>`
    + disc(1071, false, '#99532f', '#6c3518')
    + back
    + disc(648, true, '#95502a', '#6a3518')
    + front;

// soft shadow on the floor
let rays = '';
for (let a = 9; a < 360; a += 18) {
    const r = a * Math.PI / 180;
    rays += `M${CX + 200 * Math.sin(r)} ${1130 - 116 * Math.cos(r)}L${CX + 430 * Math.sin(r)} ${1130 - 248 * Math.cos(r)}`;
}
document.getElementById('shadow').innerHTML = `
    <ellipse cx="1250" cy="1108" rx="115" ry="66" stroke-width="26" stroke-opacity=".35"/>
    <ellipse cx="1250" cy="1060" rx="42" ry="24" stroke-width="10" stroke-opacity=".25"/>
    <path d="${rays}" stroke-width="8" stroke-opacity=".14"/>`;
```
